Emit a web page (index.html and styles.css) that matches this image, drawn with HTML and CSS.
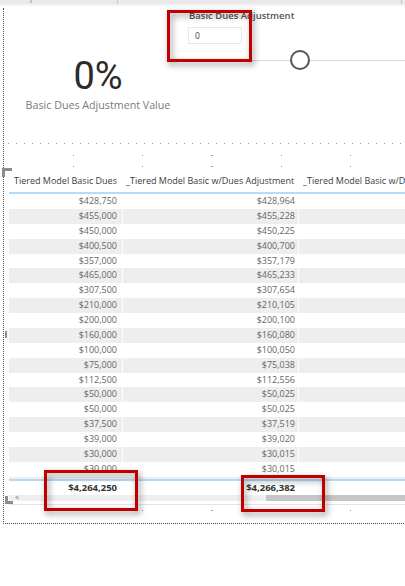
FILE: index.html
```html
<!DOCTYPE html>
<html>
<head>
<meta charset="utf-8">
<link rel="stylesheet" href="styles.css">
</head>
<body>
<div class="page">
  <div class="ribbon">
    <span class="rib-label rib-clip">Clipboard</span>
    <span class="rib-sep rib-sep1"></span>
    <span class="rib-label rib-data">Data</span>
    <span class="rib-sep rib-sep2"></span>
  </div>

  <div class="frame"></div>
  <div class="grid-minor"></div>
  <div class="grid-major gm1"></div>
  <div class="grid-major gm2"></div>
  <div class="grid-major gm3"></div>

  <section class="card">
    <div class="card-value">0%</div>
    <div class="card-label">Basic Dues Adjustment Value</div>
  </section>

  <section class="slicer">
    <div class="slicer-title">Basic Dues Adjustment</div>
    <div class="slicer-input">0</div>
  </section>
  <div class="slider"><span class="slider-thumb"></span></div>

  <section class="table">
    <div class="thead">
      <div class="th th1">Tiered Model Basic Dues</div>
      <div class="th th2">_Tiered Model Basic w/Dues Adjustment</div>
      <div class="th th3">_Tiered Model Basic w/Dues Adjustment %</div>
    </div>
    <div class="tbody">
      <div class="row"><div class="c c1">$428,750</div><div class="c c2">$428,964</div><div class="c c3"></div></div>
      <div class="row"><div class="c c1">$455,000</div><div class="c c2">$455,228</div><div class="c c3"></div></div>
      <div class="row"><div class="c c1">$450,000</div><div class="c c2">$450,225</div><div class="c c3"></div></div>
      <div class="row"><div class="c c1">$400,500</div><div class="c c2">$400,700</div><div class="c c3"></div></div>
      <div class="row"><div class="c c1">$357,000</div><div class="c c2">$357,179</div><div class="c c3"></div></div>
      <div class="row"><div class="c c1">$465,000</div><div class="c c2">$465,233</div><div class="c c3"></div></div>
      <div class="row"><div class="c c1">$307,500</div><div class="c c2">$307,654</div><div class="c c3"></div></div>
      <div class="row"><div class="c c1">$210,000</div><div class="c c2">$210,105</div><div class="c c3"></div></div>
      <div class="row"><div class="c c1">$200,000</div><div class="c c2">$200,100</div><div class="c c3"></div></div>
      <div class="row"><div class="c c1">$160,000</div><div class="c c2">$160,080</div><div class="c c3"></div></div>
      <div class="row"><div class="c c1">$100,000</div><div class="c c2">$100,050</div><div class="c c3"></div></div>
      <div class="row"><div class="c c1">$75,000</div><div class="c c2">$75,038</div><div class="c c3"></div></div>
      <div class="row"><div class="c c1">$112,500</div><div class="c c2">$112,556</div><div class="c c3"></div></div>
      <div class="row"><div class="c c1">$50,000</div><div class="c c2">$50,025</div><div class="c c3"></div></div>
      <div class="row"><div class="c c1">$50,000</div><div class="c c2">$50,025</div><div class="c c3"></div></div>
      <div class="row"><div class="c c1">$37,500</div><div class="c c2">$37,519</div><div class="c c3"></div></div>
      <div class="row"><div class="c c1">$39,000</div><div class="c c2">$39,020</div><div class="c c3"></div></div>
      <div class="row"><div class="c c1">$30,000</div><div class="c c2">$30,015</div><div class="c c3"></div></div>
      <div class="row"><div class="c c1">$30,000</div><div class="c c2">$30,015</div><div class="c c3"></div></div>
      <div class="row"><div class="c c1">$25,000</div><div class="c c2">$25,013</div><div class="c c3"></div></div>
    </div>
    <div class="tfoot">
      <div class="c c1">$4,264,250</div><div class="c c2">$4,266,382</div><div class="c c3"></div>
    </div>
    <div class="hscroll"><span class="hscroll-arrow">&lt;</span><span class="hscroll-thumb"></span></div>
    <div class="tline"></div>
  </section>

  <span class="corner corner-tl"></span>
  <span class="corner corner-bl"></span>
  <span class="handle"></span>

  <span class="mark mark-top"></span>
  <span class="mark mark-left"></span>
  <span class="mark mark-right"></span>
</div>
</body>
</html>
```

FILE: styles.css
```css
html, body {
  margin: 0;
  padding: 0;
  background: #ffffff;
}

.page {
  position: relative;
  width: 405px;
  height: 586px;
  overflow: hidden;
  background: #ffffff;
  font-family: "Open Sans", "Noto Sans", sans-serif;
}

/* ribbon strip at top */
.ribbon {
  position: absolute;
  left: 0;
  top: 0;
  width: 405px;
  height: 4px;
  background: #e9e9e9;
  border-bottom: 2px solid #f3f3f3;
  overflow: hidden;
}
.rib-label {
  position: absolute;
  top: -10px;
  font-size: 11px;
  line-height: 12px;
  color: #9a9a9a;
}
.rib-clip { left: 17px; }
.rib-data { left: 250px; }
.rib-sep {
  position: absolute;
  top: 0;
  width: 1px;
  height: 4px;
  background: #c8c8c8;
}
.rib-sep1 { left: 117px; }
.rib-sep2 { left: 401px; }

/* canvas frame */
.frame {
  position: absolute;
  left: 3px;
  top: 8px;
  width: 420px;
  height: 515px;
  border-left: 1px dotted #4a4a4a;
  border-bottom: 1px dotted #4a4a4a;
}

.grid-minor {
  position: absolute;
  left: 8px;
  top: 143px;
  width: 400px;
  height: 1px;
  background: repeating-linear-gradient(to right, #9a9a9a 0 1px, transparent 1px 8px);
}
.grid-major {
  position: absolute;
  left: 73px;
  width: 340px;
  height: 1px;
  background: repeating-linear-gradient(to right, #9a9a9a 0 1px, transparent 1px 69.25px);
}
.gm1 { top: 155px; }
.gm2 { top: 166px; }
.gm3 { top: 510px; }

/* card */
.card {
  position: absolute;
  left: 3px;
  top: 57px;
  width: 190px;
  display: flex;
  flex-direction: column;
  align-items: center;
}
.card-value {
  font-family: Roboto, "Liberation Sans", sans-serif;
  font-size: 38px;
  line-height: 38px;
  color: #2b2b2b;
}
.card-label {
  margin-top: 4px;
  font-size: 10.7px;
  line-height: 13px;
  color: #7a7a7a;
  white-space: nowrap;
}

/* slicer */
.slicer {
  position: absolute;
  left: 188px;
  top: 10px;
  display: flex;
  flex-direction: column;
}
.slicer-title {
  padding-left: 1px;
  font-size: 9.5px;
  line-height: 12px;
  font-weight: 600;
  color: #555555;
  white-space: nowrap;
}
.slicer-input {
  margin-top: 5px;
  box-sizing: border-box;
  width: 54px;
  height: 17px;
  padding-left: 6px;
  border: 1px solid #e8e8e8;
  font-size: 8.5px;
  line-height: 15px;
  color: #444444;
}
.slider {
  position: absolute;
  left: 198px;
  top: 50px;
  width: 220px;
  height: 20px;
  display: flex;
  align-items: center;
  background: linear-gradient(#d8d8d8, #d8d8d8) left center / 100% 1px no-repeat;
}
.slider-thumb {
  margin-left: 92px;
  box-sizing: border-box;
  width: 20px;
  height: 20px;
  border: 2px solid #555555;
  border-radius: 50%;
  background: #ffffff;
}

/* table */
.table {
  position: absolute;
  left: 9px;
  top: 170px;
  width: 430px;
}
.thead,
.row,
.tfoot {
  display: grid;
  grid-template-columns: 113px 175px 1fr;
  column-gap: 1px;
}
.thead {
  box-sizing: border-box;
  height: 24px;
  padding-bottom: 2px;
  align-items: center;
  border-bottom: 2px solid #b9daf5;
  font-size: 9px;
  color: #3c3c3c;
  white-space: nowrap;
}
.th { overflow: hidden; }
.th1 { padding-left: 5px; }
.th2 { padding-left: 3px; }
.th3 { padding-left: 4px; }

.tbody {
  height: 285px;
  overflow: hidden;
}
.row {
  height: 14.88px;
}
.row:nth-child(even) .c {
  background: #eeeeee;
}
.c {
  text-align: right;
  font-size: 9px;
  line-height: 14.88px;
  color: #666666;
  white-space: nowrap;
}
.c1 { padding-right: 5px; }
.c2 { padding-right: 3px; }

.tfoot {
  height: 13px;
  border-top: 2px solid #b9daf5;
}
.tfoot .c {
  font-size: 9.5px;
  line-height: 13px;
  font-weight: 700;
  color: #333333;
}

.hscroll {
  margin-top: 1px;
  height: 6px;
  display: flex;
  background: #efefef;
}
.hscroll-arrow {
  width: 251px;
  padding-left: 6px;
  font-size: 7px;
  line-height: 6px;
  color: #666666;
}
.hscroll-thumb {
  flex: 1;
  background: #c6c6c6;
}
.tline {
  margin-top: 3px;
  height: 1px;
  background: #e4e4e4;
}

/* selection corners */
.corner {
  position: absolute;
  box-sizing: border-box;
  border-color: #8c8c8c;
  border-style: solid;
  border-width: 0;
}
.corner-tl {
  left: 2px;
  top: 168px;
  width: 10px;
  height: 9px;
  border-top-width: 3px;
  border-left-width: 3px;
}
.corner-bl {
  left: 5px;
  top: 496px;
  width: 8px;
  height: 8px;
  border-left-width: 3px;
  border-bottom-width: 3px;
}
.handle {
  position: absolute;
  left: 5px;
  top: 331px;
  width: 2px;
  height: 7px;
  background: #8c8c8c;
}

/* red annotation boxes */
.mark {
  position: absolute;
  box-sizing: border-box;
  border: 3px solid #c00000;
  filter: drop-shadow(2px 3px 3px rgba(0, 0, 0, 0.45));
}
.mark-top {
  left: 167px;
  top: 10px;
  width: 85px;
  height: 52px;
}
.mark-left {
  left: 44px;
  top: 470px;
  width: 94px;
  height: 41px;
}
.mark-right {
  left: 241px;
  top: 475px;
  width: 84px;
  height: 37px;
}
```
